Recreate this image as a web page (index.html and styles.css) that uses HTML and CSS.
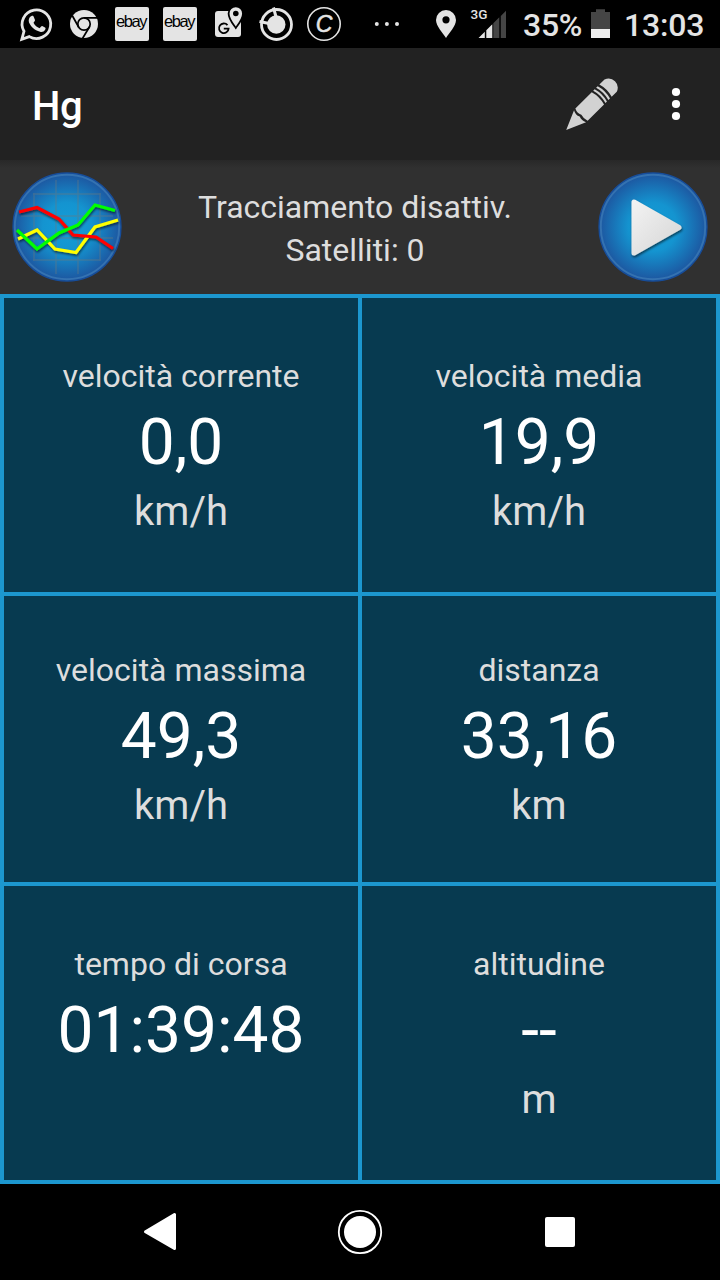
FILE: index.html
```
<!DOCTYPE html>
<html lang="it">
<head>
<meta charset="UTF-8" />
<meta name="viewport" content="width=device-width,initial-scale=1.0" />
<title>Hg</title>
<link rel="stylesheet" href="styles.css">
</head>
<body>
  <div class="status">
    <div class="notifications">
      <!-- whatsapp -->
      <svg class="slot" viewBox="0 0 48 48">
        <path d="M9.8 39.3 L12 31.3 A14.3 14.3 0 1 1 17.3 36.6 Z" fill="none" stroke="#e4e4e4" stroke-width="2.8"/>
        <path d="M19.5 16 C21 15.5 21.5 16 22 17.5 L23 20 C23.2 21 21.8 22 21.5 22.8 C23 25.6 25 27.2 27.6 28.2 C28.6 27.4 29.2 26 30.2 26 L33 27.5 C34 28 33.5 29 33 30 C32 31.7 30 32.2 28 31.7 C22.5 30.5 18.5 26 17 22.5 C16.2 20 17 17 19.5 16Z" fill="#e4e4e4"/>
      </svg>
      <!-- chrome -->
      <svg class="slot" viewBox="0 0 48 48">
        <circle cx="24" cy="24" r="14" fill="#e4e4e4"/>
        <g fill="none" stroke="#000" stroke-width="1.7">
          <circle cx="24" cy="24" r="6.2"/>
          <path d="M24 17.8 H38 M18.6 27 L12.2 15.5 M29.4 27 L22.5 38.5"/>
        </g>
      </svg>
      <svg class="slot" viewBox="0 0 48 48">
        <rect x="7" y="7" width="34" height="34" rx="2" fill="#e4e4e4"/>
        <text class="ebay" x="8" y="27.2" textLength="31.5">ebay</text>
      </svg>
      <svg class="slot" viewBox="0 0 48 48">
        <rect x="7" y="7" width="34" height="34" rx="2" fill="#e4e4e4"/>
        <text class="ebay" x="8" y="27.2" textLength="31.5">ebay</text>
      </svg>
      <!-- maps -->
      <svg class="slot" viewBox="0 0 48 48">
        <rect x="11" y="11" width="26" height="26" rx="3" fill="#e4e4e4"/>
        <path d="M31.8 28 C29 24 24.6 19 24.6 13.5 A7.2 7.2 0 0 1 39 13.5 C39 19 34.6 24 31.8 28Z" fill="#e4e4e4" stroke="#000" stroke-width="1.8"/>
        <circle cx="31.8" cy="13.5" r="2.8" fill="#000"/>
        <path d="M23.5 25.2 A4.8 4.8 0 1 0 24.6 28.6 H19.8" fill="none" stroke="#000" stroke-width="1.8"/>
      </svg>
      <svg class="slot" viewBox="0 0 48 48">
        <circle cx="24.5" cy="24.5" r="15" fill="none" stroke="#e4e4e4" stroke-width="2.8"/>
        <circle cx="24.3" cy="24.5" r="9.2" fill="#e4e4e4"/>
        <path d="M24 17 L21.5 7.5 M17 23.5 L7.5 21.5" stroke="#e4e4e4" stroke-width="3"/>
      </svg>
      <svg class="slot" viewBox="0 0 48 48">
        <circle cx="24" cy="24" r="16.2" fill="none" stroke="#e4e4e4" stroke-width="1.6"/>
        <text class="letter-c" x="24" y="32" text-anchor="middle">C</text>
      </svg>
    </div>
    <svg class="more" viewBox="0 0 26 48" fill="#e4e4e4">
      <circle cx="2.8" cy="24" r="2"/><circle cx="12.9" cy="24" r="2"/><circle cx="23" cy="24" r="2"/>
    </svg>
    <svg class="pin" viewBox="0 0 20 48">
      <path fill-rule="evenodd" d="M10 38 C7 33 0 26 0 20 A10 10 0 0 1 20 20 C20 26 13 33 10 38Z M10 16.2 A3.6 3.6 0 1 0 10 23.4 A3.6 3.6 0 1 0 10 16.2Z" fill="#e4e4e4"/>
    </svg>
    <svg class="signal" viewBox="0 0 38 48">
      <text class="net" x="-.5" y="18.7">3G</text>
      <path d="M7.5 38 L13.8 31.7 V38Z M15.3 30.2 L21.3 24.2 V38 H15.3Z" fill="#e4e4e4"/>
      <path d="M22.3 23.2 L28.3 17.2 V38 H22.3Z M29.8 16 L35 10.8 V38 H29.8Z" fill="#454545"/>
    </svg>
    <span class="battery-text">35%</span>
    <svg class="battery" viewBox="0 0 19 48">
      <path d="M0 12 H5 V9.3 H14 V12 H19 V29 H0Z" fill="#454545"/>
      <path d="M0 29 H19 V38 H0Z" fill="#eee"/>
    </svg>
    <span class="clock">13:03</span>
  </div>

  <div class="toolbar">
    <h1 class="title">Hg</h1>
    <svg class="pencil" viewBox="0 0 54 54">
      <g transform="translate(.2 53) rotate(-45) scale(1.03 1.06)" fill="#d2d2d2">
        <path d="M0 0 L19 -8 Q16.5 -4 18.5 0 Q17 4 19 8Z"/>
        <path d="M21 -8.2 H43.5 Q46 0 43.5 8.2 H21 Q19.5 4 20.8 0 Q18.8 -4 21 -8.2Z"/>
        <path d="M45.5 -8.2 H47.5 Q50 0 47.5 8.2 H45.5 Q48 0 45.5 -8.2Z"/>
        <path d="M49.5 -8.2 H51.7 Q54.2 0 51.7 8.2 H49.5 Q52 0 49.5 -8.2Z"/>
        <path d="M54 -8.2 H61 Q67 -6 67 0 Q67 6 61 8.2 H54 Q56.5 0 54 -8.2Z"/>
      </g>
    </svg>
    <svg class="overflow" viewBox="0 0 10 34" fill="#fff">
      <circle cx="5" cy="5" r="4.1"/><circle cx="5" cy="17" r="4.1"/><circle cx="5" cy="29" r="4.1"/>
    </svg>
  </div>

  <div class="tracking">
    <svg class="round" viewBox="0 0 110 110">
      <defs>
        <radialGradient id="blue">
          <stop offset="0" stop-color="#139dd7"/>
          <stop offset=".45" stop-color="#1494d0"/>
          <stop offset="1" stop-color="#1d559f"/>
        </radialGradient>
        <filter id="shadow" x="-20%" y="-20%" width="140%" height="150%">
          <feDropShadow dx="0.7" dy="1.7" stdDeviation="1" flood-color="#000" flood-opacity=".6"/>
        </filter>
      </defs>
      <circle cx="55" cy="55" r="54" fill="url(#blue)" stroke="#164d9b" stroke-width="1.3"/>
      <circle cx="55" cy="55" r="52.2" fill="none" stroke="#3472b1" stroke-width="2"/>
      <g stroke="#687b80" stroke-opacity=".45" stroke-width="1.4">
        <path d="M22 21 V89 M44 8 V102 M66 8 V102 M88 21 V89 M21 22 H89 M9 44 H101 M9 66 H101 M21 88 H89"/>
      </g>
      <g fill="none" stroke-width="3.2" filter="url(#shadow)">
        <path d="M6 67 L25 58 L43 77 L64 80.5 L83 55 L106 48" stroke="#ff0"/>
        <path d="M7 40 L25 35.5 L47 47 L61 63 L84 65 L101 76.5" stroke="#f00"/>
        <path d="M5 58 L25 77 L47 61 L66 53 L83 33 L103 38.5" stroke="#0f0"/>
      </g>
    </svg>
    <div class="state">
      <div>Tracciamento disattiv.</div>
      <div>Satelliti: 0</div>
    </div>
    <svg class="round" viewBox="0 0 110 110">
      <defs>
        <linearGradient id="silver" x1="0" y1="0" x2="1" y2="1">
          <stop offset="0" stop-color="#f2f2f2"/>
          <stop offset="1" stop-color="#d6d6d6"/>
        </linearGradient>
      </defs>
      <circle cx="55" cy="55" r="54" fill="url(#blue)" stroke="#164d9b" stroke-width="1.3"/>
      <circle cx="55" cy="55" r="52.2" fill="none" stroke="#3472b1" stroke-width="2"/>
      <path d="M36 30 V81 L81 55.5Z" fill="url(#silver)" stroke="url(#silver)" stroke-width="5" stroke-linejoin="round" filter="url(#shadow)"/>
    </svg>
  </div>

  <div class="grid">
    <div class="cell">
      <div class="label">velocità corrente</div>
      <div class="value">0,0</div>
      <div class="unit">km/h</div>
    </div>
    <div class="cell">
      <div class="label">velocità media</div>
      <div class="value">19,9</div>
      <div class="unit">km/h</div>
    </div>
    <div class="cell">
      <div class="label">velocità massima</div>
      <div class="value">49,3</div>
      <div class="unit">km/h</div>
    </div>
    <div class="cell">
      <div class="label">distanza</div>
      <div class="value">33,16</div>
      <div class="unit">km</div>
    </div>
    <div class="cell">
      <div class="label">tempo di corsa</div>
      <div class="value">01:39:48</div>
      <div class="unit"></div>
    </div>
    <div class="cell">
      <div class="label">altitudine</div>
      <div class="value">--</div>
      <div class="unit">m</div>
    </div>
  </div>

  <div class="nav">
    <svg viewBox="0 0 48 48"><path d="M9.5 23.7 L38.5 6.5 V40.5Z" fill="#fff" stroke="#fff" stroke-width="3" stroke-linejoin="round"/></svg>
    <svg viewBox="0 0 48 48"><circle cx="24" cy="24" r="21.2" fill="none" stroke="#fff" stroke-width="1.8"/><circle cx="24" cy="24" r="16" fill="#fff"/></svg>
    <svg viewBox="0 0 48 48"><rect x="9" y="9" width="30" height="30" rx="2" fill="#fff"/></svg>
  </div>
</body>
</html>
```

FILE: styles.css
```
* { box-sizing:border-box; }
body { margin:0; width:720px; height:1280px; display:flex; flex-direction:column; background:#000; font-family:Roboto, "Noto Sans", sans-serif; overflow:hidden; }
svg { display:block; flex:none; }

.status { height:48px; display:flex; align-items:center; padding-left:12px; color:#e4e4e4; font-size:32px; font-weight:500; line-height:48px; white-space:nowrap; }
.notifications { display:flex; }
.slot { width:48px; height:48px; }
.ebay { font-family:"Liberation Sans", Arial, sans-serif; font-size:16.5px; font-weight:400; fill:#000; }
.letter-c { font-family:"Liberation Sans", Arial, sans-serif; font-size:23px; font-weight:400; font-style:italic; fill:#e4e4e4; stroke:#e4e4e4; stroke-width:.5; }
.more { width:26px; height:48px; margin-left:26px; }
.pin { width:20px; height:48px; margin-left:36px; }
.signal { width:38px; height:48px; margin-left:15px; overflow:visible; }
.net { font-family:Roboto, sans-serif; font-size:13.5px; font-weight:500; fill:#e4e4e4; }
.battery-text { width:60px; margin-left:14px; padding-top:1px; letter-spacing:-.3px; }
.battery { width:19px; height:48px; margin-left:8px; }
.clock { margin-left:14px; padding-top:1px; letter-spacing:-.2px; }

.toolbar { height:112px; display:flex; align-items:center; padding:0 39px 0 32px; background:#222; }
.title { flex:1; margin:0; padding-top:6px; color:#fff; font-size:40px; font-weight:500; line-height:48px; letter-spacing:-.4px; }
.pencil { width:54px; height:54px; }
.overflow { width:10px; height:34px; margin-left:51px; }

.tracking { height:134px; display:flex; align-items:center; justify-content:space-between; padding:0 12px; background:linear-gradient(#282828, #303030 8px); }
.round { width:110px; height:110px; }
.state { color:#ddd; font-size:32px; line-height:43px; text-align:center; padding:4px 10px 0 0; }

.grid { height:890px; display:grid; grid-template-columns:1fr 1fr; grid-template-rows:294px 286px 294px; gap:4px; padding:4px; background:#1c97cf; }
.cell { display:flex; flex-direction:column; justify-content:center; padding-bottom:2px; background:#073a50; text-align:center; }
.label { color:#ddd; font-size:32px; line-height:44px; }
.value { color:#fff; font-size:64px; line-height:90px; }
.unit { height:47px; color:#ddd; font-size:40px; line-height:47px; }

.nav { flex:1; display:flex; align-items:center; justify-content:center; gap:152px; }
.nav svg { width:48px; height:48px; }
```
